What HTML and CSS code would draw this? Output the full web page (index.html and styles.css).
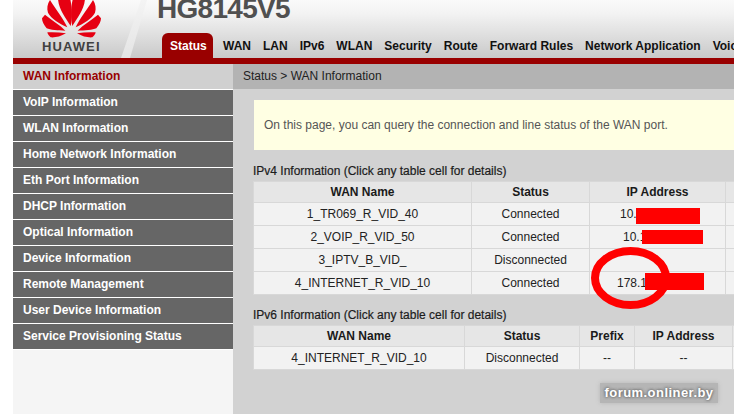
FILE: index.html
```html
<!DOCTYPE html>
<html>
<head>
<meta charset="utf-8">
<title>HG8145V5</title>
<link rel="stylesheet" href="styles.css">
</head>
<body>
<div class="page">
  <header class="header">
    <div class="brand">
      <svg class="logo" width="120" height="40" viewBox="0 0 360 120">
        <defs>
          <g id="petals">
            <path d="M122 78 C108 55 85 28 84 -5 L120 -5 C127 20 127 55 122 78Z"/>
            <path d="M112 82 C90 72 62 55 54 38 C50 25 52 12 60 0 C75 25 100 55 112 82Z"/>
            <path d="M106 92 C85 92 60 90 50 85 C42 75 36 65 36 55 L45 44 C65 60 90 75 106 92Z"/>
            <path d="M108 100 C92 110 75 113 62 112 C56 107 53 102 52 97 C70 96 90 97 108 100Z"/>
          </g>
        </defs>
        <g fill="#e60012">
          <use href="#petals"/>
          <use href="#petals" transform="translate(249 0) scale(-1 1)"/>
        </g>
      </svg>
      <span class="wordmark">HUAWEI</span>
    </div>
    <div class="swoosh"></div>
    <div class="head-main">
      <h1 class="model">HG8145V5</h1>
      <nav class="tabs">
        <a class="tab tab-active">Status</a>
        <a class="tab">WAN</a>
        <a class="tab">LAN</a>
        <a class="tab">IPv6</a>
        <a class="tab">WLAN</a>
        <a class="tab">Security</a>
        <a class="tab">Route</a>
        <a class="tab">Forward Rules</a>
        <a class="tab">Network Application</a>
        <a class="tab">Voice</a>
      </nav>
    </div>
  </header>
  <div class="redbar"></div>
  <div class="body">
    <aside class="side">
      <a class="side-active">WAN Information</a>
      <a class="side-item">VoIP Information</a>
      <a class="side-item">WLAN Information</a>
      <a class="side-item">Home Network Information</a>
      <a class="side-item">Eth Port Information</a>
      <a class="side-item">DHCP Information</a>
      <a class="side-item">Optical Information</a>
      <a class="side-item">Device Information</a>
      <a class="side-item">Remote Management</a>
      <a class="side-item">User Device Information</a>
      <a class="side-item">Service Provisioning Status</a>
    </aside>
    <main class="main">
      <div class="crumb">Status &gt; WAN Information</div>
      <div class="content">
        <div class="notice">On this page, you can query the connection and line status of the WAN port.</div>
        <h2 class="sec sec-v4">IPv4 Information (Click any table cell for details)</h2>
        <table class="tbl tbl-v4">
          <tr><th class="c1">WAN Name</th><th class="c2">Status</th><th class="c3">IP Address</th><th></th></tr>
          <tr><td>1_TR069_R_VID_40</td><td>Connected</td><td><span class="ip ip1">10.<i class="mask mask1"></i></span></td><td></td></tr>
          <tr><td>2_VOIP_R_VID_50</td><td>Connected</td><td><span class="ip ip2">10.1<i class="mask mask2"></i></span></td><td></td></tr>
          <tr><td>3_IPTV_B_VID_</td><td>Disconnected</td><td></td><td></td></tr>
          <tr><td>4_INTERNET_R_VID_10</td><td>Connected</td><td><span class="ip ip3">178.1<i class="mask mask3"></i></span></td><td></td></tr>
        </table>
        <h2 class="sec sec-v6">IPv6 Information (Click any table cell for details)</h2>
        <table class="tbl tbl-v6">
          <tr><th class="d1">WAN Name</th><th class="d2">Status</th><th class="d3">Prefix</th><th class="d4">IP Address</th><th></th></tr>
          <tr><td>4_INTERNET_R_VID_10</td><td>Disconnected</td><td>--</td><td>--</td><td></td></tr>
        </table>
      </div>
    </main>
  </div>
  <svg class="circle" width="90" height="70" viewBox="0 0 90 70">
    <ellipse cx="42.500" cy="34" rx="35.500" ry="27" fill="none" stroke="#f00" stroke-width="8"/>
  </svg>
  <div class="watermark">forum.onliner.by</div>
</div>
</body>
</html>
```
FILE: styles.css
```css
* { box-sizing: border-box; }
html, body { margin: 0; padding: 0; }
body { width: 734px; height: 414px; overflow: hidden; background: #fff; font-family: "Liberation Sans", Arial, sans-serif; }
.page { position: relative; margin-left: 13px; width: 721px; height: 414px; overflow: hidden; background: #f5f5f5; }
.header { position: relative; height: 58px; display: flex; background: linear-gradient(#fafafa 0%, #f2f2f2 25%, #c9c9c9 100%); }
.brand { width: 107px; flex: none; position: relative; }
.logo { position: absolute; left: 17px; top: 0; }
.wordmark { position: absolute; left: 29px; top: 39px; font-size: 13px; line-height: 16px; font-weight: bold; color: #404040; letter-spacing: 1.100px; }
.swoosh { position: absolute; left: 108px; top: 0; width: 26px; height: 58px; background: linear-gradient(#f4f4f4, #e4e4e4); clip-path: polygon(20px 0, 26px 0, 9px 58px, 0 58px); }
.head-main { flex: 1; padding-left: 42px; min-width: 0; }
.model { margin: -7px 0 0 -5px; height: 40px; font-size: 28px; line-height: 32px; font-weight: bold; color: #505050; letter-spacing: -0.700px; }
.tabs { display: flex; height: 25px; white-space: nowrap; }
.tab { font-size: 12px; font-weight: bold; color: #111; line-height: 26px; margin-right: 12px; flex: none; }
.tab-active { margin-right: 10px; padding: 0 8px; background: #990000; color: #fff; border-radius: 6px 6px 0 0; width: 51px; text-align: center; }
.redbar { height: 6px; background: #990000; }
.body { display: flex; height: 350px; }
.side { width: 220px; flex: none; display: flex; flex-direction: column; background: #f5f5f5; }
.side a { display: block; font-size: 12px; padding-left: 10px; }
.side-active { height: 26px; line-height: 24px; background: #d0d0d0; color: #990000; font-weight: bold; border-bottom: 1px solid #fff; }
.side-item { height: 26px; line-height: 25px; background: #666; color: #fff; font-weight: bold; border-bottom: 1px solid #fff; }
.main { flex: 1; background: #d2d2d2; min-width: 0; }
.crumb { height: 25px; line-height: 24px; background: #b3b3b3; font-size: 12px; color: #222; padding-left: 10px; }
.content { padding: 11px 0 0 20px; }
.notice { height: 50px; width: 500px; margin-left: 1px; background: #ffffe3; font-size: 12px; color: #555; line-height: 50px; padding-left: 10px; }
.sec { margin: 0; font-size: 12px; font-weight: normal; color: #1c1c1c; line-height: 14px; -webkit-text-stroke: 0.2px #1c1c1c; }
.sec-v4 { margin-top: 14px; height: 17px; }
.sec-v6 { margin-top: 13px; height: 17px; }
.tbl { border-collapse: collapse; table-layout: fixed; width: 500px; font-size: 12px; color: #222; }
.tbl th, .tbl td { border: 1px solid #d8d8d8; padding: 0; text-align: center; overflow: hidden; white-space: nowrap; }
.tbl th { background: #e6e6e6; height: 21px; font-weight: bold; color: #1a1a1a; }
.tbl td { background: #f2f2f2; height: 23px; }
.c1 { width: 218px; }
.c2 { width: 118px; }
.c3 { width: 136px; }
.d1 { width: 211px; }
.d2 { width: 115px; }
.d3 { width: 55px; }
.d4 { width: 98px; }
.ip { position: relative; display: inline-block; width: 100%; text-align: left; }
.ip1 { padding-left: 30px; }
.ip2 { padding-left: 33px; }
.ip3 { padding-left: 27px; }
.mask { position: absolute; background: #f00; display: block; }
.mask1 { left: 46px; top: 1px; width: 64px; height: 16px; }
.mask2 { left: 52px; top: 0; width: 61px; height: 14px; }
.mask3 { left: 55px; top: -3px; width: 59px; height: 17px; }
.circle { position: absolute; left: 575px; top: 244px; }
.watermark { position: absolute; left: 587px; top: 383px; width: 118px; height: 20px; background: rgba(130,130,130,0.35); color: #fff; font-size: 13px; font-weight: bold; line-height: 20px; text-align: center; letter-spacing: 0.450px; text-shadow: 0 0 3px #666, 0 0 3px #666; box-shadow: 0 0 4px rgba(130,130,130,0.35); }
```
